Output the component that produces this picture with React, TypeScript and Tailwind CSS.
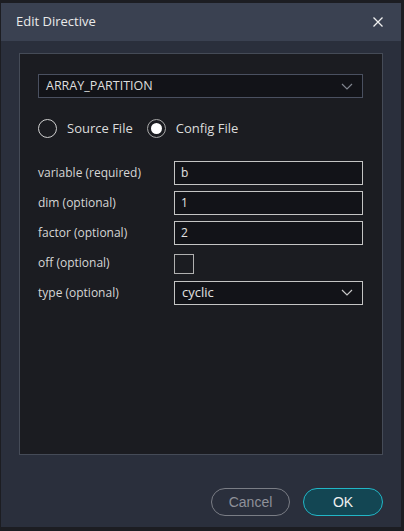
import React from "react"

const font = "font-['Open_Sans','Noto_Sans',sans-serif]"

function Chevron({ color = "#c8c8c8" }: { color?: string }) {
    return (
        <svg width="12" height="7" viewBox="0 0 12 7" fill="none">
            <path d="M1 1l5 5 5-5" stroke={color} strokeWidth="1.2" />
        </svg>
    )
}

function Radio({ checked, label }: { checked?: boolean; label: string }) {
    return (
        <div className="flex items-center gap-[10px]">
            <div
                className={
                    "w-[19px] h-[19px] rounded-full border-[1.5px] flex items-center justify-center " +
                    (checked ? "border-[#a8a8a8]" : "border-[#cfcfcf]")
                }
            >
                {checked && <div className="w-[11px] h-[11px] rounded-full bg-white" />}
            </div>
            <span className="text-[13px] text-[#dcdcdc]">{label}</span>
        </div>
    )
}

function Field({ label, children }: { label: string; children: React.ReactNode }) {
    return (
        <div className="flex items-center h-[24px]">
            <span className="w-[136px] text-[12px] text-[#d6d6d6]">{label}</span>
            {children}
        </div>
    )
}

function TextInput({ value }: { value: string }) {
    return (
        <div className="w-[189px] h-[24px] border border-[#c4c4c4] bg-[#121318] flex items-center px-[6px] text-[12px] text-[#e2e2e2]">
            {value}
        </div>
    )
}

export default function App() {
    return (
        <div className={`w-[404px] h-[531px] bg-[#1c1d22] pt-[3px] pl-[1px] ${font}`}>
            <div className="w-[400px] h-[524px] bg-[#2a2f3c] flex flex-col">
                {/* header */}
                <div className="h-[38px] bg-[#3a4151] flex items-center justify-between pl-[15px] pr-[18px]">
                    <span className="text-[13px] text-[#eaeaea]">Edit Directive</span>
                    <svg width="10" height="10" viewBox="0 0 10 10">
                        <path d="M0.5 0.5l9 9M9.5 0.5l-9 9" stroke="#f0f0f0" strokeWidth="1.3" />
                    </svg>
                </div>

                {/* body */}
                <div className="pl-[18px] pt-[12px]">
                    <div className="w-[364px] h-[402px] border border-[#454b57] bg-[#1b1c21] pl-[18px] pt-[20px] flex flex-col">
                        <div className="w-[325px] h-[24px] border border-[#4a5060] bg-[#121318] flex items-center justify-between pl-[7px] pr-[9px]">
                            <span className="text-[12.5px] text-[#dedede]">ARRAY_PARTITION</span>
                            <Chevron color="#80858f" />
                        </div>

                        <div className="flex items-center gap-[14px] mt-[21px]">
                            <Radio label="Source File" />
                            <Radio checked label="Config File" />
                        </div>

                        <div className="flex flex-col gap-[6px] mt-[22px]">
                            <Field label="variable (required)">
                                <TextInput value="b" />
                            </Field>
                            <Field label="dim (optional)">
                                <TextInput value="1" />
                            </Field>
                            <Field label="factor (optional)">
                                <TextInput value="2" />
                            </Field>
                            <Field label="off (optional)">
                                <div className="w-[20px] h-[20px] mt-[2px] border-[1.5px] border-[#b0b0b0] bg-[#1b1c21]" />
                            </Field>
                            <Field label="type (optional)">
                                <div className="w-[189px] h-[24px] border border-[#c4c4c4] bg-[#121318] flex items-center justify-between pl-[7px] pr-[9px]">
                                    <span className="text-[13px] text-[#e2e2e2]">cyclic</span>
                                    <Chevron />
                                </div>
                            </Field>
                        </div>
                    </div>
                </div>

                {/* footer */}
                <div className="flex justify-end gap-[13px] pr-[18px] mt-[33px]">
                    <button className="w-[79px] h-[28px] rounded-full border border-[#7a7d85] text-[14px] text-[#8e9199] font-['Liberation_Sans',sans-serif]">
                        Cancel
                    </button>
                    <button className="w-[80px] h-[28px] rounded-full border border-[#21b6c6] bg-[#134653] text-[14px] text-[#f0f0f0] font-['Liberation_Sans',sans-serif]">
                        OK
                    </button>
                </div>
            </div>
        </div>
    )
}
